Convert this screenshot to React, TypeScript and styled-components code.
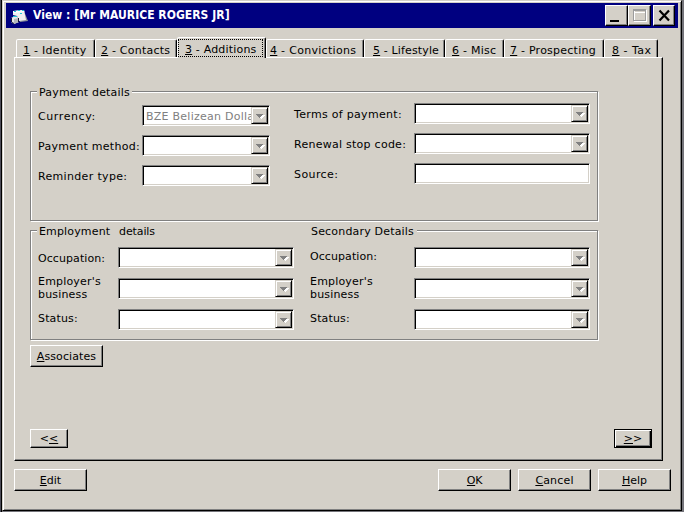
import React from 'react';
import styled, { createGlobalStyle, css } from 'styled-components';

const face = '#d4d0c8';
const shade = '#808080';

const GlobalStyle = createGlobalStyle`
  body { margin: 0; overflow: hidden; background: #74747a; }
  *, *::before { box-sizing: border-box; }
`;

const Desktop = styled.div`
  width: 684px;
  height: 512px;
  padding: 0 2px 1px 1px;
  border-left: 1px solid #4c4c58;
  background: linear-gradient(90deg, #000 1px, #74747a 1px);
  font: 11px/13px 'DejaVu Sans', Verdana, sans-serif;
  color: #000;
  white-space: pre;
`;

const Window = styled.main`
  width: 680px;
  height: 511px;
  display: flex;
  flex-direction: column;
  padding: 2px 3px 0;
  background: ${face};
  border: 1px solid;
  border-color: ${face} #000 #000 ${face};
  box-shadow: inset 1px 1px #fff, inset -1px -1px ${shade};
`;

const TitleBar = styled.header`
  height: 25px;
  flex: none;
  display: flex;
  align-items: center;
  padding: 0 3px 0 5px;
  background: #000080;
`;

const Title = styled.h1`
  flex: 1;
  margin: 0 0 0 4px;
  font: bold 12px/15px 'DejaVu Sans Condensed', Tahoma, sans-serif;
  letter-spacing: 0.04px;
  color: #fff;
`;

const raised = css`
  background: ${face};
  border: 1px solid;
  border-color: #fff #000 #000 #fff;
  box-shadow: inset -1px -1px ${shade};
`;

const CaptionButton = styled.button<{ $width?: number; $gap?: number }>`
  ${raised}
  width: ${(p) => p.$width ?? 23}px;
  height: 21px;
  margin: 0 0 0 ${(p) => p.$gap ?? 0}px;
  padding: 0;
  display: flex;
  align-items: flex-start;
  justify-content: flex-start;
  overflow: hidden;
  svg { display: block; flex: none; }
`;

const TabRow = styled.nav`
  height: 20px;
  flex: none;
  margin: 9px 0 0 10px;
  display: flex;
  align-items: flex-end;
`;

const Tab = styled.div<{ $width: number; $indent: number; $active?: boolean }>`
  position: relative;
  width: ${(p) => p.$width}px;
  height: ${(p) => (p.$active ? 21 : 18)}px;
  margin-bottom: ${(p) => (p.$active ? -1 : 0)}px;
  padding: ${(p) => (p.$active ? 5 : 4)}px 0 0 ${(p) => p.$indent}px;
  background: ${face};
  border: 1px solid;
  border-color: #fff #000 transparent #fff;
  border-bottom-width: 0;
  border-radius: 2px 2px 0 0;
  box-shadow: inset -1px 0 ${shade};
  z-index: ${(p) => (p.$active ? 1 : 0)};
`;

const FocusRect = styled.span`
  position: absolute;
  inset: 1px 2px 1px 0;
  border: 1px dotted #000;
`;

const Panel = styled.section`
  width: 649px;
  height: 404px;
  flex: none;
  margin-left: 8px;
  padding: 33px 0 0 15px;
  display: flex;
  flex-direction: column;
  align-items: flex-start;
  border: 1px solid;
  border-color: #fff #000 #000 #fff;
  box-shadow: inset -1px -1px ${shade};
`;

const Group = styled.section<{ $height: number; $gap?: number }>`
  width: 568px;
  height: ${(p) => p.$height}px;
  margin-top: ${(p) => p.$gap ?? 0}px;
  border: 1px solid ${shade};
  box-shadow: 1px 1px #fff, inset 1px 1px #fff;
`;

const Legend = styled.h2<{ $width: number }>`
  width: ${(p) => p.$width}px;
  height: 13px;
  margin: -6px 0 0 6px;
  padding-left: 2px;
  display: flex;
  font: inherit;
  background: ${face};
`;

const LegendPart = styled.span<{ $width?: number }>`
  width: ${(p) => (p.$width ? p.$width + 'px' : 'auto')};
`;

const Columns = styled.div<{ $second: number }>`
  display: grid;
  grid-template-columns: ${(p) => p.$second}px auto;
  justify-content: start;
  align-items: start;
  padding-left: 7px;
`;

const Fields = styled.div<{ $labelWidth: number; $fieldWidth: number; $rowGap: number; $top: number }>`
  display: grid;
  grid-template-columns: ${(p) => p.$labelWidth}px ${(p) => p.$fieldWidth}px;
  grid-auto-rows: 21px;
  row-gap: ${(p) => p.$rowGap}px;
  margin-top: ${(p) => p.$top}px;
`;

const FieldLabel = styled.label<{ $drop?: number }>`
  margin-top: ${(p) => p.$drop ?? 5}px;
`;

const Field = styled.div`
  height: 21px;
  display: flex;
  padding: 1px;
  overflow: hidden;
  background: #fff;
  border: 1px solid;
  border-color: ${shade} #fff #fff ${shade};
  box-shadow: inset 1px 1px #000, inset -1px -1px ${face};
`;

const FieldValue = styled.span`
  flex: 1;
  min-width: 0;
  overflow: hidden;
  padding: 3px 0 0 2px;
  color: ${shade};
`;

const DropButton = styled.span`
  width: 17px;
  height: 17px;
  flex: none;
  padding: 5px 0 0 4px;
  background: ${face};
  border: 1px solid;
  border-color: ${face} #000 #000 ${face};
  box-shadow: inset 1px 1px #fff, inset -1px -1px ${shade};
  svg { display: block; }
`;

const PushButton = styled.button<{ $width: number; $height?: number; $default?: boolean }>`
  ${raised}
  width: ${(p) => p.$width}px;
  height: ${(p) => p.$height ?? 22}px;
  padding: 0;
  display: flex;
  align-items: center;
  justify-content: center;
  font: inherit;
  color: #000;
  ${(p) =>
    p.$default &&
    css`
      border-color: #000;
      box-shadow: inset 1px 1px #fff, inset -1px -1px #000, inset -2px -2px ${shade};
    `}
`;

const AssociatesSlot = styled.div`
  margin-top: 5px;
`;

const Pager = styled.div`
  width: 622px;
  margin-top: 62px;
  display: flex;
  justify-content: space-between;
`;

const Footer = styled.footer`
  display: flex;
  gap: 7px;
  margin: 8px 7px 0 8px;
`;

const Spacer = styled.span`
  flex: 1;
`;

const Caption = styled.span<{ $tracking?: number }>`
  letter-spacing: ${(p) => p.$tracking ?? 0}px;
  u {
    text-decoration: underline 1px;
    text-underline-offset: 1px;
    text-decoration-skip-ink: none;
  }
`;

function Text({ value, tracking }: { value: string; tracking?: number }) {
  const parts = value.split('&');
  return (
    <Caption $tracking={tracking}>
      {parts[0]}
      {parts.length > 1 && (
        <>
          <u>{parts[1][0]}</u>
          {parts[1].slice(1)}
        </>
      )}
    </Caption>
  );
}

function ComboBox({ value = '' }: { value?: string }) {
  return (
    <Field>
      <FieldValue>
        <Text value={value} tracking={0.25} />
      </FieldValue>
      <DropButton>
        <svg width="9" height="6" shapeRendering="crispEdges">
          <path d="M1 1h7v1h-1v1h-1v1h-1v1h-1v-1h-1v-1h-1v-1h-1z" fill="#fff" transform="translate(1 1)" />
          <path d="M0 1h7v1h-1v1h-1v1h-1v1h-1v-1h-1v-1h-1v-1h-1z" fill={shade} />
        </svg>
      </DropButton>
    </Field>
  );
}

const AppIcon = () => (
  <svg width="18" height="18" viewBox="0 0 18 18">
    <path d="M13 4L17 14L9 15L8 12z" fill="#8c9098" />
    <path d="M2 4L13 3L15 13L8 14L6 9L2 8z" fill="#f0f0f0" />
    <path d="M2 4L13 3L13.4 5L2.4 6z" fill="#fff" />
    <path d="M3 4h2v1H3zM7 3h2v1H7zM11 3h2v1h-2zM9 6h2v1H9z" fill="#20c8d8" />
    <path d="M0 11L4 9L8 11V15L3 17L0 15z" fill="#e8e8e8" />
    <path d="M3 12L8 11V15L3 17z" fill="#b4b8bc" />
    <path d="M0 11h1v4H0zM1 15l2 1v1l-2-1zM7 11h1v4H7z" fill="#181830" />
    <path d="M2 9h4v1H2z" fill="#20c8d8" />
  </svg>
);

const tabs = [
  { label: '&1 - Identity', width: 79, indent: 6, tracking: 0.28 },
  { label: '&2 - Contacts', width: 82, indent: 5, tracking: 0.22 },
  { label: '&3 - Additions', width: 89, indent: 7, tracking: 0.18, active: true },
  { label: '&4 - Convictions', width: 98, indent: 3, tracking: 0.3 },
  { label: '&5 - Lifestyle', width: 81, indent: 8, tracking: 0.14 },
  { label: '&6 - Misc', width: 59, indent: 6, tracking: 0.25 },
  { label: '&7 - Prospecting', width: 100, indent: 5, tracking: 0.24 },
  { label: '&8 - Tax', width: 54, indent: 7, tracking: 0.5 },
];

const paymentLeft = [
  { label: 'Currency:', tracking: 0.6, value: 'BZE Belizean Dollar' },
  { label: 'Payment method:', tracking: 0.27 },
  { label: 'Reminder type:', tracking: 0.33 },
];

const paymentRight = [
  { label: 'Terms of payment:', tracking: 0.31 },
  { label: 'Renewal stop code:', tracking: 0.26 },
  { label: 'Source:', tracking: 0.4, plain: true },
];

export default function App() {
  const employment = (occupationDrop: number) => (
    <>
      <FieldLabel $drop={occupationDrop}><Text value="Occupation:" tracking={0.08} /></FieldLabel>
      <ComboBox />
      <FieldLabel $drop={-3}><Text value={"Employer's\nbusiness"} tracking={0.18} /></FieldLabel>
      <ComboBox />
      <FieldLabel $drop={3}><Text value="Status:" tracking={0.16} /></FieldLabel>
      <ComboBox />
    </>
  );

  return (
    <>
      <GlobalStyle />
      <Desktop>
        <Window>
          <TitleBar>
            <AppIcon />
            <Title>View : [Mr MAURICE ROGERS JR]</Title>
            <CaptionButton aria-label="Minimize">
              <svg width="21" height="19"><path d="M4 14h9v2H4z" /></svg>
            </CaptionButton>
            <CaptionButton aria-label="Maximize">
              <svg width="21" height="19" shapeRendering="crispEdges" fill="none">
                <path d="M5.5 4.5h12v11h-12zM5 6.5h13" stroke="#fff" />
                <path d="M4.5 3.5h12v11h-12zM5 4.5h12" stroke="#9c9c9c" />
              </svg>
            </CaptionButton>
            <CaptionButton aria-label="Close" $width={22} $gap={2}>
              <svg width="20" height="19"><path d="M5.5 4.5L15 14.5M15 4.5L5.5 14.5" stroke="#000" strokeWidth="2.2" /></svg>
            </CaptionButton>
          </TitleBar>

          <TabRow>
            {tabs.map((t) => (
              <Tab key={t.label} $width={t.width} $indent={t.indent} $active={t.active}>
                {t.active && <FocusRect />}
                <Text value={t.label} tracking={t.tracking} />
              </Tab>
            ))}
          </TabRow>

          <Panel>
            <Group $height={130}>
              <Legend $width={95}><Text value="Payment details" tracking={0.17} /></Legend>
              <Columns $second={256}>
                <Fields $labelWidth={104} $fieldWidth={128} $rowGap={9} $top={6}>
                  {paymentLeft.map((f) => (
                    <React.Fragment key={f.label}>
                      <FieldLabel><Text value={f.label} tracking={f.tracking} /></FieldLabel>
                      <ComboBox value={f.value} />
                    </React.Fragment>
                  ))}
                </Fields>
                <Fields $labelWidth={120} $fieldWidth={176} $rowGap={9} $top={4}>
                  {paymentRight.map((f) => (
                    <React.Fragment key={f.label}>
                      <FieldLabel><Text value={f.label} tracking={f.tracking} /></FieldLabel>
                      {f.plain ? <Field /> : <ComboBox />}
                    </React.Fragment>
                  ))}
                </Fields>
              </Columns>
            </Group>

            <Group $height={110} $gap={9}>
              <Legend $width={380}>
                <LegendPart $width={80}><Text value="Employment" tracking={0.15} /></LegendPart>
                <LegendPart $width={192}><Text value="details" tracking={-0.1} /></LegendPart>
                <LegendPart><Text value="Secondary Details" tracking={0.18} /></LegendPart>
              </Legend>
              <Columns $second={272}>
                <Fields $labelWidth={80} $fieldWidth={176} $rowGap={10} $top={9}>{employment(5)}</Fields>
                <Fields $labelWidth={104} $fieldWidth={176} $rowGap={10} $top={9}>{employment(3)}</Fields>
              </Columns>
            </Group>

            <AssociatesSlot>
              <PushButton $width={73}><Text value="&Associates" tracking={0.1} /></PushButton>
            </AssociatesSlot>
            <Pager>
              <PushButton $width={38} $height={19}><Text value="<&<" /></PushButton>
              <PushButton $width={38} $height={19} $default><Text value="&>>" /></PushButton>
            </Pager>
          </Panel>

          <Footer>
            <PushButton $width={73}><Text value="&Edit" /></PushButton>
            <Spacer />
            <PushButton $width={73}><Text value="&OK" tracking={-0.3} /></PushButton>
            <PushButton $width={73}><Text value="&Cancel" tracking={0.16} /></PushButton>
            <PushButton $width={73}><Text value="&Help" /></PushButton>
          </Footer>
        </Window>
      </Desktop>
    </>
  );
}
